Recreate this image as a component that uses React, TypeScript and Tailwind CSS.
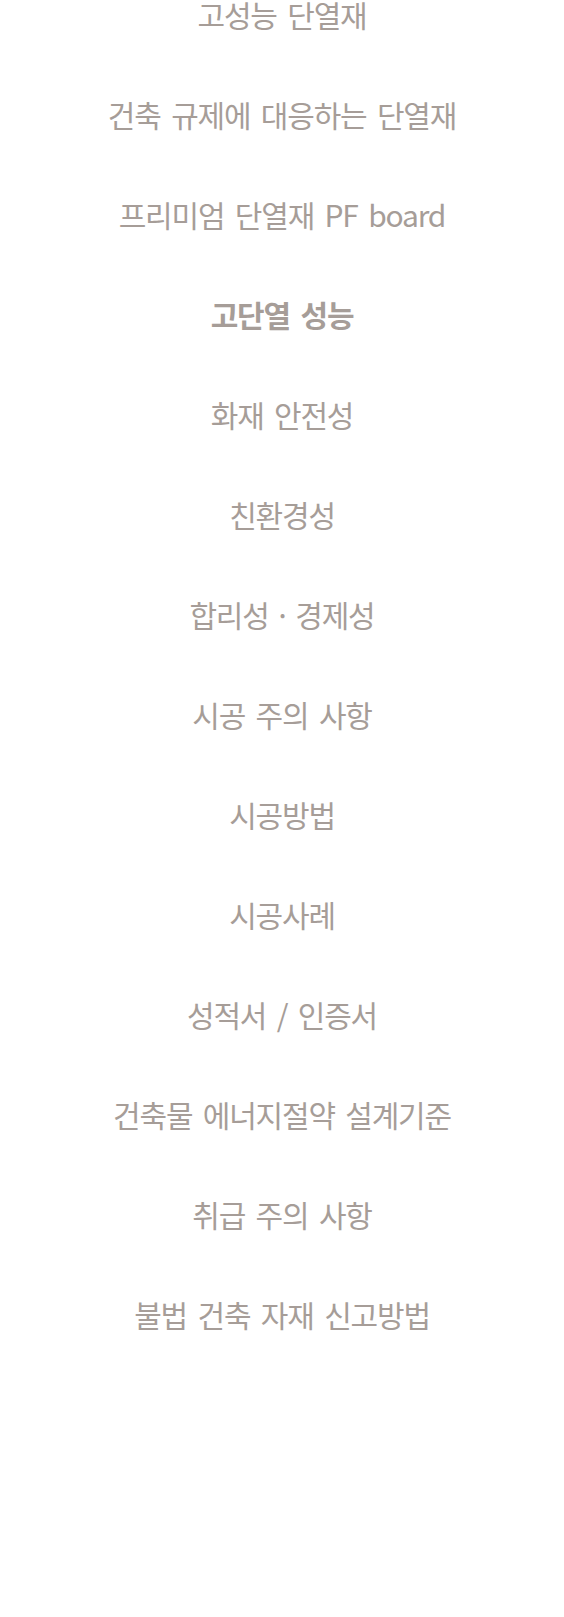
const menu = [
  { label: '고성능 단열재' },
  { label: '건축 규제에 대응하는 단열재' },
  { label: '프리미엄 단열재 PF board' },
  { label: '고단열 성능', active: true },
  { label: '화재 안전성' },
  { label: '친환경성' },
  { label: '합리성 · 경제성', tight: true },
  { label: '시공 주의 사항' },
  { label: '시공방법' },
  { label: '시공사례' },
  { label: '성적서 / 인증서' },
  { label: '건축물 에너지절약 설계기준' },
  { label: '취급 주의 사항' },
  { label: '불법 건축 자재 신고방법' },
]

export default function App() {
  return (
    <div className="h-[1617px] overflow-hidden bg-white font-['Noto_Sans_CJK_KR','Noto_Sans',sans-serif]">
      <ul className="-mt-[36px] flex flex-col">
        {menu.map((item) => (
          <li
            key={item.label}
            className={
              'flex h-[100px] items-center justify-center text-[30px] tracking-[-0.04em] text-[#a69d98] ' +
              (item.tight ? '[word-spacing:0px] ' : '[word-spacing:5px] ') +
              (item.active ? 'font-bold' : 'font-normal')
            }
          >
            {item.label}
          </li>
        ))}
      </ul>
    </div>
  )
}
